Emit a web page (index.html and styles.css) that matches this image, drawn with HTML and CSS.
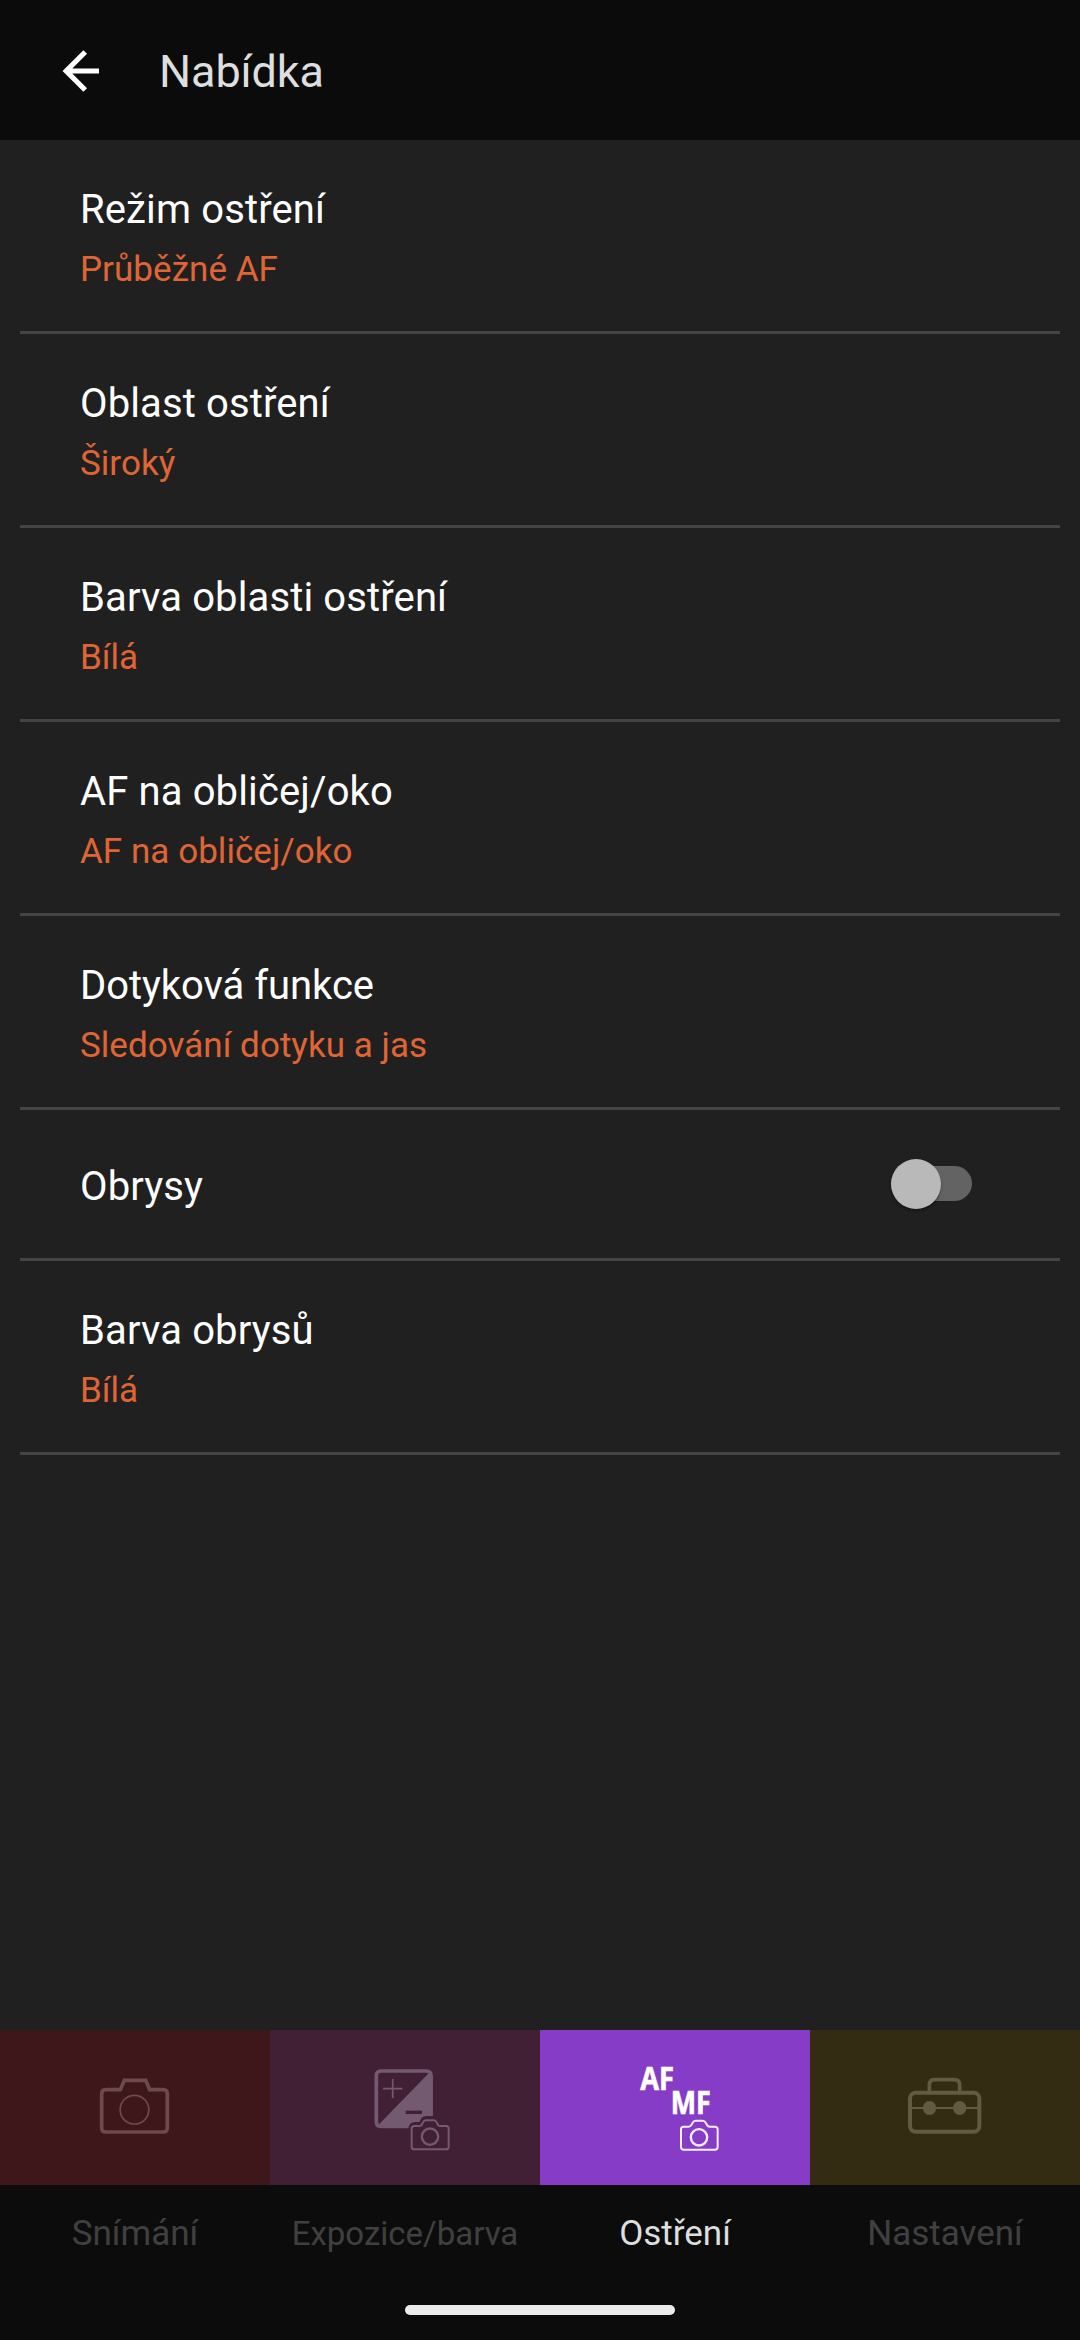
FILE: index.html
```html
<!DOCTYPE html>
<html lang="cs">
<head>
<meta charset="utf-8">
<title>Nabídka</title>
<link rel="stylesheet" href="styles.css">
</head>
<body>
<div class="screen">
  <header class="topbar">
    <svg class="back" viewBox="0 0 38 44" fill="none" stroke="#fff" stroke-width="5.2"><path d="M23.200 3 4.200 22 23.200 41M4 22H37"/></svg>
    <h1 class="heading">Nabídka</h1>
  </header>
  <main class="list">
    <div class="row"><div class="title">Režim ostření</div><div class="value">Průběžné AF</div></div>
    <div class="row"><div class="title">Oblast ostření</div><div class="value">Široký</div></div>
    <div class="row"><div class="title">Barva oblasti ostření</div><div class="value">Bílá</div></div>
    <div class="row"><div class="title">AF na obličej/oko</div><div class="value">AF na obličej/oko</div></div>
    <div class="row"><div class="title title-tight">Dotyková funkce</div><div class="value">Sledování dotyku a jas</div></div>
    <div class="row row-switch"><div class="title">Obrysy</div><div class="switch"><div class="thumb"></div></div></div>
    <div class="row"><div class="title">Barva obrysů</div><div class="value">Bílá</div></div>
  </main>
  <nav class="tabs">
    <div class="tab">
      <div class="tile tile-shoot">
        <svg class="icon" viewBox="-240 -60 810 465" fill="none" stroke="#6c4a4e"><path stroke-width="11" d="M78 119H121L133 91H197L209 119H249Q262 119 262 132V233Q262 246 249 246H78Q65 246 65 233V132Q65 119 78 119Z"/><circle stroke-width="5" cx="163.500" cy="179" r="43"/></svg>
      </div>
      <div class="label">Snímání</div>
    </div>
    <div class="tab">
      <div class="tile tile-exposure">
        <svg class="icon" viewBox="-240 -60 810 465" fill="none" stroke="#745a70">
          <path fill="#745a70" stroke="none" d="M88 222 236 70Q248 72 248 80V198H229Q219 198 214 205L208 216H194Q180 217 177 229L174 234H92Z"/>
          <path stroke-width="11" d="M243 198V77Q243 63 229 63H93Q79 63 79 77V215Q79 229 93 229H175"/>
          <path stroke-width="5" d="M99 116H157M128 87V144"/>
          <path stroke="#412036" stroke-width="10" d="M167 187H216"/>
          <path stroke-width="6" d="M193 228H209Q214 228 216 223L219 217Q222 211 228 211H251Q257 211 260 217L263 223Q265 228 270 228H288Q296 228 296 236V290Q296 298 288 298H193Q185 298 185 290V236Q185 228 193 228Z"/>
          <circle stroke-width="7" cx="240" cy="260" r="24.500"/>
        </svg>
      </div>
      <div class="label label-small">Expozice/barva</div>
    </div>
    <div class="tab">
      <div class="tile tile-focus">
        <svg class="icon" viewBox="-240 -60 810 465" fill="none" stroke="#f6effb">
          <text class="glyph" x="61" y="121" textLength="101" lengthAdjust="spacingAndGlyphs">AF</text>
          <text class="glyph" x="152" y="193" textLength="120" lengthAdjust="spacingAndGlyphs">MF</text>
          <path stroke-width="6" d="M191 230H206Q211 230 214 225L218 218Q221 212 227 212H248Q254 212 257 218L261 225Q264 230 269 230H285Q293 230 293 238V291Q293 299 285 299H191Q183 299 183 291V238Q183 230 191 230Z"/>
          <circle stroke-width="7" cx="237" cy="262" r="24.500"/>
        </svg>
      </div>
      <div class="label label-active">Ostření</div>
    </div>
    <div class="tab">
      <div class="tile tile-setup">
        <svg class="icon" viewBox="-240 -60 810 465" fill="none" stroke="#625a41">
          <rect stroke-width="12" x="60" y="128" width="208" height="117" rx="17"/>
          <path stroke-width="11" d="M118 124V105Q118 89 134 89H193Q209 89 209 105V124"/>
          <path stroke-width="6" d="M62 174H266"/>
          <ellipse fill="#625a41" stroke="none" cx="118.500" cy="174" rx="20" ry="21"/><ellipse fill="#625a41" stroke="none" cx="209" cy="174" rx="20" ry="21"/>
        </svg>
      </div>
      <div class="label">Nastavení</div>
    </div>
  </nav>
  <footer class="homebar"><div class="pill"></div></footer>
</div>
</body>
</html>
```
FILE: styles.css
```css
* { box-sizing: border-box; }
body { margin: 0; font-family: Roboto, sans-serif; background: #0c0c0c; }
.screen { width: 1080px; height: 2340px; display: flex; flex-direction: column; }
.topbar { height: 140px; display: flex; align-items: center; gap: 59px; padding: 2px 0 0 62px; background: #0b0b0b; }
.back { width: 38px; height: 44px; }
.heading { margin: 0; padding-top: 2px; font-size: 45px; font-weight: 400; line-height: 54px; letter-spacing: -0.1px; color: #dedede; }
.list { flex: 1; background: #202020; padding: 0 20px; }
.row { height: 194px; border-bottom: 3px solid #444; padding: 46px 60px 0; }
.title { font-size: 40px; line-height: 48px; letter-spacing: 0.13px; color: #fff; }
.title-tight { letter-spacing: -0.05px; }
.value { font-size: 35px; line-height: 42px; padding-top: 15px; letter-spacing: 0.04px; color: #e06535; }
.row-switch { height: 151px; display: flex; align-items: flex-start; justify-content: space-between; padding: 53px 88px 0 60px; }
.switch { width: 81px; height: 35px; margin-top: 3px; border-radius: 18px; background: #636363; display: flex; align-items: center; }
.thumb { width: 50px; height: 50px; flex: none; border-radius: 50%; background: #b9b9b9; box-shadow: 0 2px 3px rgba(0, 0, 0, 0.35); }
.tabs { display: grid; grid-template-columns: repeat(4, 270px); height: 275px; }
.tab { display: flex; flex-direction: column; }
.tile { height: 155px; }
.tile-shoot { background: #3e171b; }
.tile-exposure { background: #412036; }
.tile-focus { background: #873cc7; }
.tile-setup { background: #342c12; }
.icon { display: block; width: 270px; height: 155px; }
.glyph { font-family: "Open Sans", sans-serif; font-weight: 700; font-size: 98px; fill: #fff; stroke: #fff; stroke-width: 2px; }
.label { padding-top: 28px; text-align: center; font-size: 35px; line-height: 42px; color: #404040; }
.label-small { font-size: 33px; }
.label-active { color: #dedede; }
.homebar { height: 35px; display: flex; justify-content: center; }
.pill { width: 270px; height: 10px; border-radius: 5px; background: #ececec; }
```
